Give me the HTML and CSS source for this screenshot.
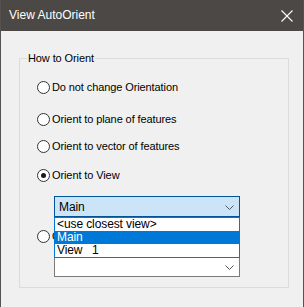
FILE: index.html
```html
<!DOCTYPE html>
<html lang="en">
<head>
    <meta charset="UTF-8">
    <title>View AutoOrient</title>
    <link rel="stylesheet" href="styles.css">
</head>
<body>
    <div class="window">
        <div class="titlebar">
            <span class="title">View AutoOrient</span>
            <svg class="close" width="12" height="12" viewBox="0 0 12 12">
                <path d="M0.5 0.5 L11.5 11.5 M11.5 0.5 L0.5 11.5" stroke="#fff" stroke-width="1.1" fill="none"/>
            </svg>
        </div>

        <div class="content">
            <fieldset class="group">
                <legend>How to Orient</legend>

                <label class="radio row-1"><span class="dot"></span>Do not change Orientation</label>
                <label class="radio row-2"><span class="dot"></span>Orient to plane of features</label>
                <label class="radio row-3"><span class="dot"></span>Orient to vector of features</label>
                <label class="radio row-4"><span class="dot checked"></span>Orient to View</label>

                <div class="combo-wrap">
                    <div class="combo open">
                        <span>Main</span>
                        <svg class="chev" width="9" height="5" viewBox="0 0 9 5"><path d="M0.5 0.5 L4.5 4.5 L8.5 0.5" stroke="#555" fill="none"/></svg>
                    </div>
                    <ul class="popup">
                        <li>&lt;use closest view&gt;</li>
                        <li class="sel">Main</li>
                        <li>View&nbsp;&nbsp;&nbsp;1</li>
                    </ul>
                </div>

                <!-- label mostly hidden behind the open list -->
                <label class="radio row-5"><span class="dot"></span><span class="cut">Orient to</span></label>

                <div class="combo lower">
                    <span></span>
                    <svg class="chev" width="9" height="5" viewBox="0 0 9 5"><path d="M0.5 0.5 L4.5 4.5 L8.5 0.5" stroke="#555" fill="none"/></svg>
                </div>
            </fieldset>
        </div>
    </div>
</body>
</html>
```

FILE: styles.css
```css
body {
    margin: 0;
    background: #f0f0f0;
    font-family: "Liberation Sans", Arial, sans-serif;
    font-size: 11px;
    letter-spacing: -0.1px;
    color: #000;
}

.window {
    width: 304px;
    height: 307px;
    box-sizing: border-box;
    border-left: 1px solid #56524f;
    border-right: 1px solid #56524f;
    background: #f0f0f0;
    overflow: hidden;
}

.titlebar {
    height: 31px;
    background: #4b4845;
    display: flex;
    align-items: center;
    justify-content: space-between;
    padding: 0 10px 0 8px;
    color: #fff;
}

.title {
    font-size: 12px;
    letter-spacing: 0;
    margin-top: -1px;
}

.close {
    margin-top: 1px;
}

.content {
    padding: 20px 15px 0 18px;
}

.group {
    margin: 0;
    padding: 0 0 0 17px;
    width: 270px;
    height: 237px;
    box-sizing: border-box;
    border: 1px solid #dcdcdc;
    display: flex;
    flex-direction: column;
    align-items: flex-start;
}

.group legend {
    padding: 0 1px;
    margin-left: -10px;
    line-height: 14px;
}

.radio {
    display: flex;
    align-items: center;
    height: 14px;
    line-height: 14px;
}

.row-1 { margin-top: 15px; }
.row-2 { margin-top: 18px; }
.row-3 { margin-top: 13px; }
.row-4 { margin-top: 15px; }
.row-5 { margin-top: 12px; }

.cut {
    display: inline-block;
    width: 3px;
    overflow: hidden;
    white-space: nowrap;
}

.dot {
    width: 11px;
    height: 11px;
    border: 1px solid #333;
    border-radius: 50%;
    background: #fff;
    margin-right: 2px;
    position: relative;
}

.dot.checked::after {
    content: "";
    position: absolute;
    left: 3px;
    top: 3px;
    width: 5px;
    height: 5px;
    border-radius: 50%;
    background: #1a1a1a;
}

.combo-wrap {
    position: relative;
    margin: 14px 0 0 17px;
}

.combo {
    width: 186px;
    height: 21px;
    box-sizing: border-box;
    border: 1px solid #7a7a7a;
    background: #fff;
    display: flex;
    align-items: center;
    justify-content: space-between;
    padding: 0 5px 0 4px;
    font-size: 12px;
}

.combo.open {
    background: #cce4f7;
    border-color: #005499;
}

.combo.lower {
    margin: 13px 0 0 17px;
}

.chev {
    margin-top: 1px;
}

.popup {
    position: absolute;
    left: 0;
    top: 21px;
    width: 186px;
    box-sizing: border-box;
    margin: 0;
    padding: 0;
    list-style: none;
    background: #fff;
    border: 1px solid #0078d7;
    z-index: 2;
    font-size: 12px;
}

.popup li {
    height: 13px;
    line-height: 13px;
    padding-left: 2px;
}

.popup li.sel {
    background: #0078d7;
    color: #fff;
}
```
